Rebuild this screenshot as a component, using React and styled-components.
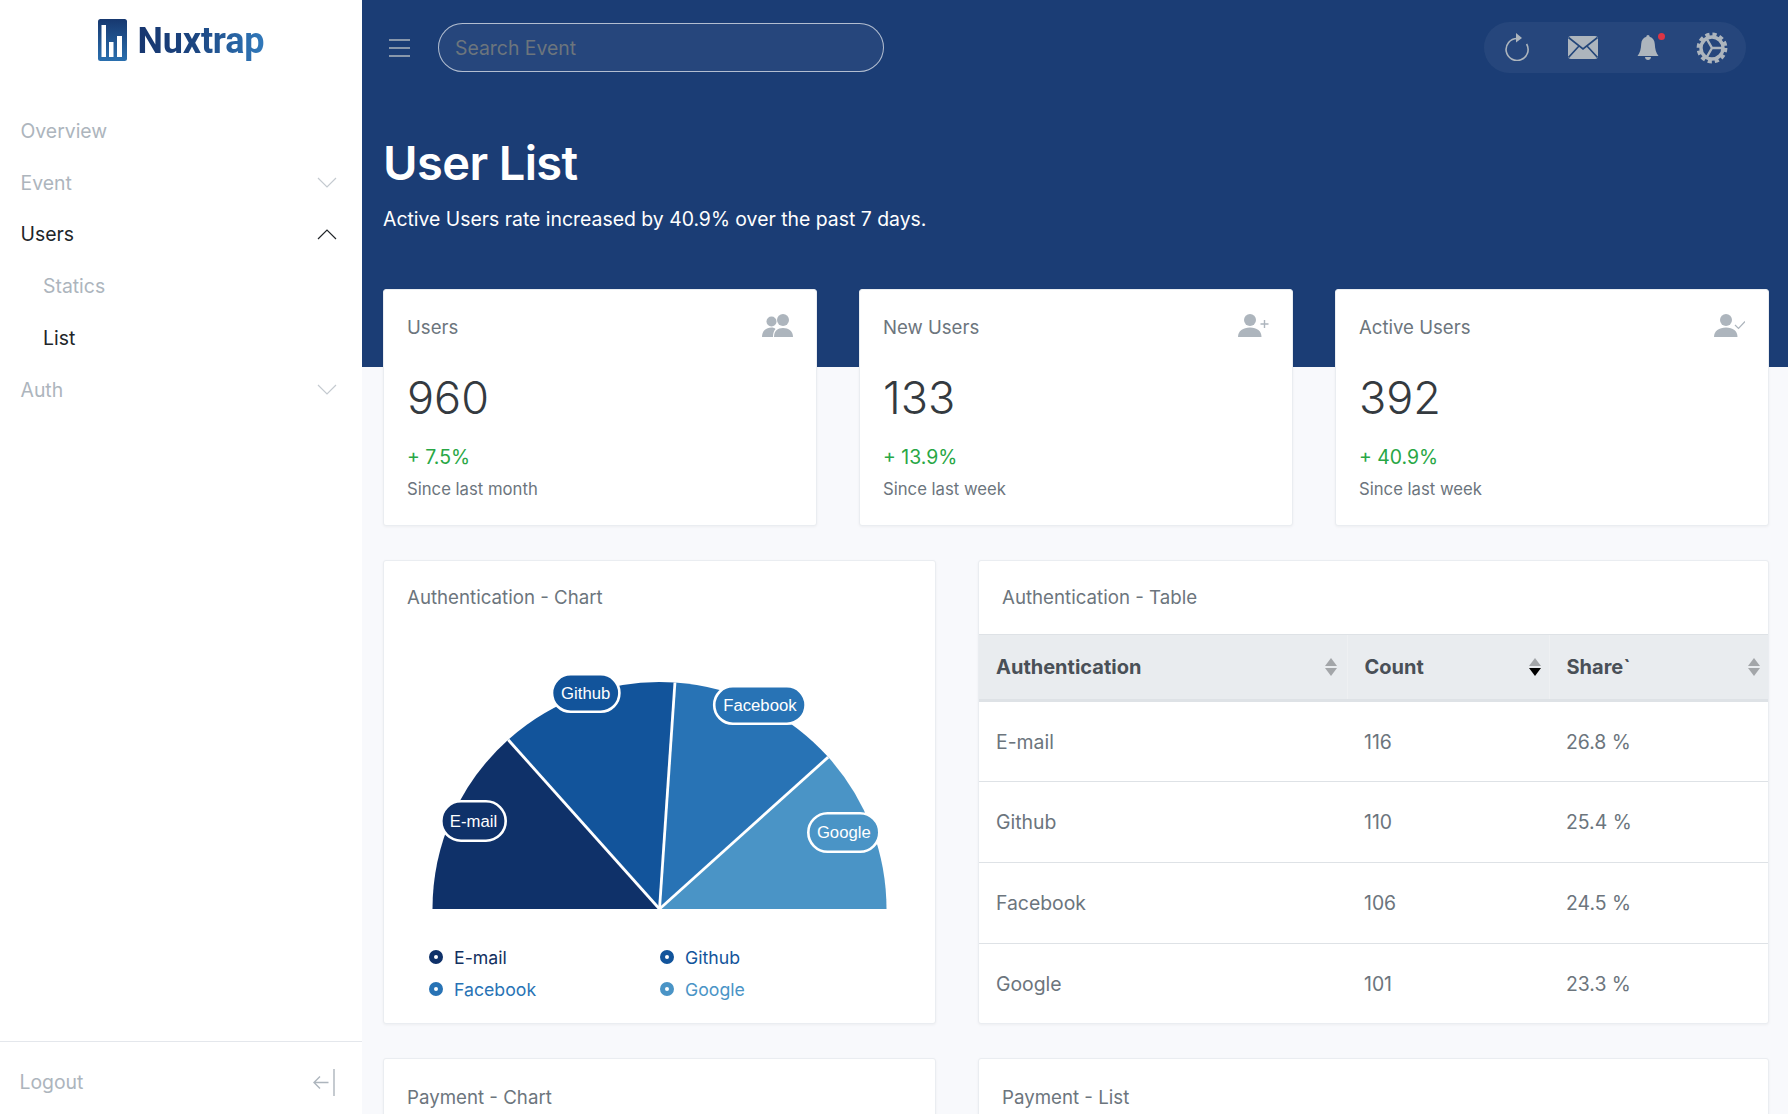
import React from "react";
import styled, { createGlobalStyle } from "styled-components";

const Global = createGlobalStyle`
  html, body { margin: 0; padding: 0; height: 100%; overflow: hidden; }
  body { font-family: Inter, "Liberation Sans", sans-serif; background: #f8f9fc; color: #212529; }
  * { box-sizing: border-box; }
`;

const Shell = styled.div`
  display: flex;
  width: 1788px;
  height: 1114px;
  overflow: hidden;
`;

const Sidebar = styled.aside`
  width: 362px;
  flex: none;
  background: #fff;
  display: flex;
  flex-direction: column;
`;

const Brand = styled.div`
  display: flex;
  align-items: flex-start;
  justify-content: center;
  gap: 10px;
  height: 105px;
  padding: 19px 0 0 0;
`;

const BrandName = styled.span`
  margin-top: 1px;
  font-family: Roboto, "Liberation Sans", sans-serif;
  font-weight: 700;
  font-size: 36px;
  line-height: 42px;
  letter-spacing: -0.2px;
  background: linear-gradient(90deg, #17366f 0%, #1c4580 45%, #3179bb 100%);
  -webkit-background-clip: text;
  background-clip: text;
  color: transparent;
`;

const Nav = styled.nav`
  flex: 1;
  display: flex;
  flex-direction: column;
`;

const NavItem = styled.div`
  height: 51.8px;
  display: flex;
  align-items: center;
  justify-content: space-between;
  padding: 0 25px 0 ${(p) => (p.$sub ? "43px" : "20.5px")};
  font-size: 19.4px;
  color: ${(p) => (p.$active ? "#212529" : "#adb5bd")};
`;

const SideFooter = styled.div`
  height: 73px;
  border-top: 1.5px solid #e4e7ec;
  display: flex;
  align-items: center;
  justify-content: space-between;
  padding: 8px 27px 0 19.5px;
  font-size: 19.4px;
  color: #adb5bd;
`;

const Main = styled.main`
  flex: 1;
  min-width: 0;
  display: flex;
  flex-direction: column;
`;

const Hero = styled.header`
  height: 367px;
  flex: none;
  background: #1b3d75;
  padding: 0 19px 0 21px;
`;

const TopBar = styled.div`
  height: 95px;
  display: flex;
  align-items: center;
  justify-content: space-between;
`;

const TopLeft = styled.div`
  display: flex;
  align-items: center;
  gap: 28px;
  padding-left: 6px;
`;

const SearchBox = styled.input`
  width: 446px;
  height: 49px;
  border: 1.5px solid rgba(255, 255, 255, 0.65);
  border-radius: 25px;
  background: rgba(255, 255, 255, 0.05);
  padding: 1px 16px 0;
  font-family: Inter, sans-serif;
  font-size: 19.4px;
  outline: none;
  &::placeholder { color: #6c757d; opacity: 1; }
`;

const IconPill = styled.div`
  width: 262px;
  height: 51px;
  margin-right: 23px;
  border-radius: 26px;
  background: rgba(255, 255, 255, 0.05);
  display: flex;
  align-items: center;
  padding-left: 19px;
`;

const IconSlot = styled.span`
  position: relative;
  display: flex;
  align-items: center;
  justify-content: center;
  width: ${(p) => p.$w}px;
  margin-right: ${(p) => p.$gap || 0}px;
`;

const Dot = styled.span`
  position: absolute;
  top: -2px;
  right: -6px;
  width: 7px;
  height: 7px;
  border-radius: 50%;
  background: #dc3545;
`;

const Title = styled.h1`
  margin: 39px 0 0;
  font-size: 47px;
  line-height: 58px;
  font-weight: 600;
  letter-spacing: -0.6px;
  color: #fff;
`;

const Subtitle = styled.p`
  margin: 13px 0 0;
  font-size: 19.4px;
  line-height: 28px;
  color: #fff;
`;

const Content = styled.div`
  padding: 0 19px 0 21px;
  display: flex;
  flex-direction: column;
  gap: 34px;
  margin-top: -78px;
`;

const StatRow = styled.div`
  display: grid;
  grid-template-columns: repeat(3, 434px);
  gap: 42px;
`;

const Card = styled.section`
  background: #fff;
  border: 1px solid #eaedf1;
  border-radius: 3px;
  box-shadow: 0 1px 3px rgba(33, 37, 41, 0.05);
`;

const StatCard = styled(Card)`
  height: 237px;
  padding: 24px 23px 0;
`;

const StatHead = styled.div`
  display: flex;
  justify-content: space-between;
  align-items: flex-start;
  height: 30px;
  font-size: 18.6px;
  line-height: 27px;
  color: #6c757d;
`;

const StatNum = styled.div`
  margin-top: 24px;
  font-size: 45px;
  line-height: 60px;
  font-weight: 300;
  color: #343a40;
`;

const StatDelta = styled.div`
  margin-top: 15px;
  font-size: 19.4px;
  line-height: 28px;
  color: #28a745;
`;

const StatNote = styled.div`
  margin-top: 6px;
  font-size: 16.7px;
  line-height: 24px;
  color: #6c757d;
`;

const PanelGrid = styled.div`
  display: grid;
  grid-template-columns: 553px 791px;
  gap: 34px 42px;
`;

const PanelHead = styled.div`
  height: 73px;
  padding: 0 23px;
  display: flex;
  align-items: center;
  font-size: 18.7px;
  color: #6c757d;
`;

const ChartPanel = styled(Card)`
  height: 464px;
`;

const Pie = styled.svg`
  display: block;
  width: 550px;
  height: 300px;
`;

const PieLabel = styled.text`
  font-family: "Liberation Sans", Arial, sans-serif;
  font-size: 16.7px;
  fill: #fff;
  text-anchor: middle;
  dominant-baseline: central;
`;

const Legend = styled.div`
  margin-top: 7px;
  padding-left: 45px;
  display: grid;
  grid-template-columns: 231px 1fr;
`;

const LegendItem = styled.div`
  height: 32px;
  display: flex;
  align-items: center;
  gap: 11px;
  font-size: 17.7px;
  color: ${(p) => p.$c};
`;

const LegendDot = styled.span`
  width: 14px;
  height: 14px;
  border-radius: 50%;
  border: 5px solid ${(p) => p.$c};
`;

const TablePanel = styled(Card)`
  height: 464px;
  overflow: hidden;
`;

const Table = styled.table`
  width: 100%;
  border-collapse: collapse;
  table-layout: fixed;
`;

const Th = styled.th`
  position: relative;
  height: 66px;
  padding: 0 17px;
  background: #e9ecef;
  border-top: 1px solid #dee2e6;
  border-bottom: 3px solid #dee2e6;
  border-left: 1px solid #eef0f2;
  text-align: left;
  font-size: 20px;
  font-weight: 700;
  color: #495057;
  &:first-child { border-left: 0; }
`;

const SortMark = styled.svg`
  position: absolute;
  right: ${(p) => p.$r}px;
  top: 22px;
  width: 12px;
  height: 20px;
`;

const Td = styled.td`
  height: 81px;
  padding: 0 17px;
  border-bottom: 1.5px solid #dee2e6;
  font-size: 19.4px;
  color: #6c757d;
`;

const Stub = styled(Card)`
  height: 120px;
  padding-top: 2px;
`;

const ICON = "#adb5bd";

const Chevron = ({ up, color }) => (
  <svg width="20" height="12" viewBox="0 0 20 12" fill="none" stroke={color} strokeWidth="1.2">
    <path d={up ? "M1 11 L10 2 L19 11" : "M1 1 L10 10 L19 1"} />
  </svg>
);

const Logo = () => (
  <svg width="30" height="42" viewBox="0 0 30 42">
    <defs>
      <linearGradient id="lg" x1="0" y1="0" x2="0" y2="1">
        <stop offset="0" stopColor="#17386f" />
        <stop offset="1" stopColor="#2a6fae" />
      </linearGradient>
    </defs>
    <rect width="29" height="42" rx="2.5" fill="url(#lg)" />
    <rect x="3.5" y="6" width="4.5" height="32" fill="#fff" />
    <rect x="11" y="23" width="4.5" height="15" fill="#fff" />
    <rect x="19" y="17" width="5" height="21" fill="#fff" />
  </svg>
);

const Hamburger = () => (
  <svg width="21" height="18" viewBox="0 0 21 18" stroke="#adb5bd" strokeWidth="1.4">
    <path d="M0 1H21M0 9H21M0 17H21" />
  </svg>
);

const RefreshIcon = () => (
  <svg width="26" height="28" viewBox="0 0 26 28" fill="none" style={{ marginTop: "-2px" }}>
    <path d="M13 5.5 A11 11 0 1 0 22.6 11" stroke={ICON} strokeWidth="1.6" />
    <path d="M12 0 L18 5 L12 9.5 Z" fill={ICON} />
  </svg>
);

const MailIcon = () => (
  <svg width="30" height="23" viewBox="0 0 30 23">
    <rect width="30" height="23" rx="3" fill={ICON} />
    <path d="M0.5 1.5 L15 13 L29.5 1.5 M0.5 21.5 L11 10 M29.5 21.5 L19 10" fill="none" stroke="#23467a" strokeWidth="1.6" />
  </svg>
);

const BellIcon = () => (
  <svg width="22" height="26" viewBox="0 0 22 26" fill={ICON}>
    <path d="M11 0 C12 0 12.6 .8 12.6 1.8 C16 2.8 17.6 5.6 17.8 9 C18 14 19 18 21.5 21 L.5 21 C3 18 4 14 4.2 9 C4.4 5.6 6 2.8 9.4 1.8 C9.4 .8 10 0 11 0 Z" />
    <path d="M8 22 H14 C14 24 12.6 25 11 25 C9.4 25 8 24 8 22 Z" />
  </svg>
);

const GearIcon = () => (
  <svg width="32" height="32" viewBox="0 0 32 32" fill="none" stroke={ICON}>
    <circle cx="16" cy="16" r="13.4" strokeWidth="4" strokeDasharray="4.1 2.92" />
    <circle cx="16" cy="16" r="11" strokeWidth="3.4" />
    <path d="M16 16 L16 5 M16 16 L25.5 21.5 M16 16 L6.5 21.5" strokeWidth="2.4" transform="rotate(-30 16 16)" />
  </svg>
);

const UsersIcon = () => (
  <svg width="31" height="23" viewBox="0 0 31 23" fill={ICON}>
    <circle cx="9.5" cy="7.5" r="5" />
    <path d="M0 23 C0 17 4 13.5 9.5 13.5 C11.5 13.5 12.5 14 13.5 15 C11.5 17 11 20 11 23 Z" />
    <circle cx="21" cy="6" r="6" />
    <path d="M12 23 C12 17 15.5 14 21 14 C26.5 14 31 17 31 23 Z" />
  </svg>
);

const UserAddIcon = ({ check }) => (
  <svg width="31" height="23" viewBox="0 0 31 23">
    <circle cx="12" cy="6" r="6" fill={ICON} />
    <path d="M0 23 C0 17 5 13.5 12 13.5 C19 13.5 23.5 17 23.5 23 Z" fill={ICON} />
    {check ? (
      <path d="M21 11 L24.5 14.5 L31 7.5" fill="none" stroke={ICON} strokeWidth="1.2" />
    ) : (
      <path d="M26.5 6 V14 M22.5 10 H30.5" fill="none" stroke={ICON} strokeWidth="1.4" />
    )}
  </svg>
);

const CollapseIcon = () => (
  <svg width="22" height="27" viewBox="0 0 22 27" fill="none" stroke="#adb5bd" strokeWidth="1.4">
    <path d="M21 0 V27 M15.5 13.5 H1 M7 7.5 L1 13.5 L7 19.5" />
  </svg>
);

const Sort = ({ r, active }) => (
  <SortMark $r={r} viewBox="0 0 12 20">
    <path d="M6 1 L12 9 H0 Z" fill="#a3a6a9" />
    <path d="M0 11 H12 L6 19 Z" fill={active ? "#000" : "#a3a6a9"} />
  </SortMark>
);

const CX = 275.5;
const CY = 275;
const R = 227;
const slices = [
  { c: "#0f3169", from: 0, to: 48.2 },
  { c: "#12549b", from: 48.2, to: 93.9 },
  { c: "#2873b5", from: 93.9, to: 138 },
  { c: "#4a94c6", from: 138, to: 180 },
];
const pt = (deg) => {
  const a = (deg * Math.PI) / 180;
  return [CX - R * Math.cos(a), CY - R * Math.sin(a)];
};

const pills = [
  { t: "E-mail", x: 57.3, y: 167.3, w: 64.4, h: 39.4, c: "#0f3169" },
  { t: "Github", x: 168, y: 40.3, w: 67.4, h: 37.4, c: "#12549b" },
  { t: "Facebook", x: 330.2, y: 52.3, w: 91.4, h: 37.4, c: "#2873b5" },
  { t: "Google", x: 424.3, y: 179.3, w: 71, h: 38.4, c: "#4a94c6" },
];

const PieChart = () => (
  <Pie viewBox="0 0 550 300">
    {slices.map((s) => {
      const [x1, y1] = pt(s.from);
      const [x2, y2] = pt(s.to);
      return <path key={s.c} d={`M${CX} ${CY} L${x1} ${y1} A${R} ${R} 0 0 1 ${x2} ${y2} Z`} fill={s.c} />;
    })}
    {slices.slice(1).map((s) => {
      const [x, y] = pt(s.from);
      return <line key={s.c} x1={CX} y1={CY} x2={x} y2={y} stroke="#fff" strokeWidth="2.8" />;
    })}
    {pills.map((p) => (
      <g key={p.t}>
        <rect x={p.x} y={p.y} width={p.w} height={p.h} rx={p.h * 0.5} fill={p.c} stroke="#fff" strokeWidth="2.6" />
        <PieLabel x={p.x + p.w / 2} y={p.y + p.h / 2}>{p.t}</PieLabel>
      </g>
    ))}
  </Pie>
);

const legend = [
  ["E-mail", "#0f3169", "#12305f"],
  ["Github", "#12549b", "#12549b"],
  ["Facebook", "#2873b5", "#2873b5"],
  ["Google", "#4a94c6", "#4a94c6"],
];

const rows = [
  ["E-mail", "116", "26.8 %"],
  ["Github", "110", "25.4 %"],
  ["Facebook", "106", "24.5 %"],
  ["Google", "101", "23.3 %"],
];

const stats = [
  { t: "Users", n: "960", d: "+ 7.5%", s: "Since last month", i: <UsersIcon /> },
  { t: "New Users", n: "133", d: "+ 13.9%", s: "Since last week", i: <UserAddIcon /> },
  { t: "Active Users", n: "392", d: "+ 40.9%", s: "Since last week", i: <UserAddIcon check /> },
];

export default function App() {
  return (
    <Shell>
      <Global />
      <Sidebar>
        <Brand>
          <Logo />
          <BrandName>Nuxtrap</BrandName>
        </Brand>
        <Nav>
          <NavItem>Overview</NavItem>
          <NavItem>Event<Chevron color="#c4cad0" /></NavItem>
          <NavItem $active>Users<Chevron up color="#212529" /></NavItem>
          <NavItem $sub>Statics</NavItem>
          <NavItem $sub $active>List</NavItem>
          <NavItem>Auth<Chevron color="#c4cad0" /></NavItem>
        </Nav>
        <SideFooter>Logout<CollapseIcon /></SideFooter>
      </Sidebar>
      <Main>
        <Hero>
          <TopBar>
            <TopLeft>
              <Hamburger />
              <SearchBox placeholder="Search Event" />
            </TopLeft>
            <IconPill>
              <IconSlot $w={28} $gap={37}><RefreshIcon /></IconSlot>
              <IconSlot $w={30} $gap={39}><MailIcon /></IconSlot>
              <IconSlot $w={22} $gap={37}><BellIcon /><Dot /></IconSlot>
              <IconSlot $w={32}><GearIcon /></IconSlot>
            </IconPill>
          </TopBar>
          <Title>User List</Title>
          <Subtitle>Active Users rate increased by 40.9% over the past 7 days.</Subtitle>
        </Hero>
        <Content>
          <StatRow>
            {stats.map((s) => (
              <StatCard key={s.t}>
                <StatHead>{s.t}{s.i}</StatHead>
                <StatNum>{s.n}</StatNum>
                <StatDelta>{s.d}</StatDelta>
                <StatNote>{s.s}</StatNote>
              </StatCard>
            ))}
          </StatRow>
          <PanelGrid>
            <ChartPanel>
              <PanelHead>Authentication - Chart</PanelHead>
              <PieChart />
              <Legend>
                {legend.map(([t, c, tc]) => (
                  <LegendItem key={t} $c={tc}><LegendDot $c={c} />{t}</LegendItem>
                ))}
              </Legend>
            </ChartPanel>
            <TablePanel>
              <PanelHead>Authentication - Table</PanelHead>
              <Table>
                <colgroup>
                  <col style={{ width: "368px" }} />
                  <col style={{ width: "202px" }} />
                  <col />
                </colgroup>
                <thead>
                  <tr>
                    <Th>Authentication<Sort r={10} /></Th>
                    <Th>Count<Sort r={8} active /></Th>
                    <Th>Share`<Sort r={8} /></Th>
                  </tr>
                </thead>
                <tbody>
                  {rows.map((r) => (
                    <tr key={r[0]}>
                      {r.map((v) => <Td key={v}>{v}</Td>)}
                    </tr>
                  ))}
                </tbody>
              </Table>
            </TablePanel>
            <Stub><PanelHead>Payment - Chart</PanelHead></Stub>
            <Stub><PanelHead>Payment - List</PanelHead></Stub>
          </PanelGrid>
        </Content>
      </Main>
    </Shell>
  );
}
